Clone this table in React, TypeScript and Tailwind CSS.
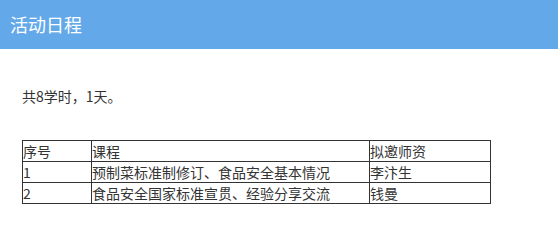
export default function App() {
  const rows = [
    { no: '1', course: '预制菜标准制修订、食品安全基本情况', teacher: '李汴生' },
    { no: '2', course: '食品安全国家标准宣贯、经验分享交流', teacher: '钱曼' },
  ];

  return (
    <div className="min-h-[250px] w-[558px] bg-white font-['Noto_Sans_CJK_SC',sans-serif] text-[#333]">
      {/* Header */}
      <div className="flex h-[49px] items-center bg-[#63a9e9] px-[10px]">
        <h1 className="text-[18px] font-normal text-white">活动日程</h1>
      </div>

      <div className="px-[22px]">
        <p className="mt-[37px] text-[14px] leading-[20px]">共8学时，1天。</p>

        <table className="mt-[34px] w-[469px] border-collapse text-[14px] leading-[19px]">
          <thead>
            <tr>
              <td className="h-[21px] w-[69px] border border-[#333] p-0 align-middle">序号</td>
              <td className="h-[21px] w-[278px] border border-[#333] p-0 align-middle">课程</td>
              <td className="h-[21px] border border-[#333] p-0 align-middle">拟邀师资</td>
            </tr>
          </thead>
          <tbody>
            {rows.map((r) => (
              <tr key={r.no}>
                <td className="h-[21px] border border-[#333] p-0 align-middle">{r.no}</td>
                <td className="h-[21px] border border-[#333] p-0 align-middle">{r.course}</td>
                <td className="h-[21px] border border-[#333] p-0 align-middle">{r.teacher}</td>
              </tr>
            ))}
          </tbody>
        </table>
      </div>
    </div>
  );
}
